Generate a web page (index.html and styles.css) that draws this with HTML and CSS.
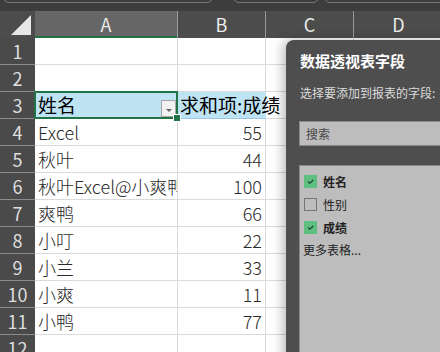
FILE: index.html
```html
<!DOCTYPE html>
<html lang="zh-CN">
<head>
<meta charset="UTF-8">
<title>数据透视表</title>
<link rel="stylesheet" href="styles.css">
</head>
<body>

<div class="topbar">
  <div class="tab tab-1"></div>
  <div class="tab tab-2"></div>
  <div class="tab tab-3"></div>
</div>

<div class="sheet">
  <!-- column headers -->
  <div class="corner"><span class="corner-tri"></span></div>
  <div class="colhead active">A</div>
  <div class="colhead">B</div>
  <div class="colhead">C</div>
  <div class="colhead">D</div>

  <div class="rowhead">1</div><div class="cell"></div><div class="cell"></div><div class="cell"></div><div class="cell"></div>
  <div class="rowhead">2</div><div class="cell"></div><div class="cell"></div><div class="cell"></div><div class="cell"></div>

  <div class="rowhead">3</div>
  <div class="cell pivot-head selected">姓名<span class="dropdown"></span><span class="handle"></span></div>
  <div class="cell pivot-head overflow">求和项:成绩</div>
  <div class="cell"></div><div class="cell"></div>

  <div class="rowhead">4</div><div class="cell">Excel</div><div class="cell num">55</div><div class="cell"></div><div class="cell"></div>
  <div class="rowhead">5</div><div class="cell">秋叶</div><div class="cell num">44</div><div class="cell"></div><div class="cell"></div>
  <div class="rowhead">6</div><div class="cell">秋叶Excel@小爽鸭</div><div class="cell num">100</div><div class="cell"></div><div class="cell"></div>
  <div class="rowhead">7</div><div class="cell">爽鸭</div><div class="cell num">66</div><div class="cell"></div><div class="cell"></div>
  <div class="rowhead">8</div><div class="cell">小叮</div><div class="cell num">22</div><div class="cell"></div><div class="cell"></div>
  <div class="rowhead">9</div><div class="cell">小兰</div><div class="cell num">33</div><div class="cell"></div><div class="cell"></div>
  <div class="rowhead">10</div><div class="cell">小爽</div><div class="cell num">11</div><div class="cell"></div><div class="cell"></div>
  <div class="rowhead">11</div><div class="cell">小鸭</div><div class="cell num">77</div><div class="cell"></div><div class="cell"></div>
  <div class="rowhead">12</div><div class="cell"></div><div class="cell"></div><div class="cell"></div><div class="cell"></div>
</div>

<div class="pane">
  <div class="pane-title">数据透视表字段</div>
  <div class="pane-sub">选择要添加到报表的字段:</div>
  <div class="search">搜索</div>
  <div class="fields">
    <div class="field checked bold"><span class="box"><svg width="13" height="13" viewBox="0 0 13 13"><path d="M4 6.5 L5.8 8.3 L9.2 5" fill="none" stroke="#1f3a2a" stroke-width="1.1"/></svg></span>姓名</div>
    <div class="field"><span class="box"></span>性别</div>
    <div class="field checked bold"><span class="box"><svg width="13" height="13" viewBox="0 0 13 13"><path d="M4 6.5 L5.8 8.3 L9.2 5" fill="none" stroke="#1f3a2a" stroke-width="1.1"/></svg></span>成绩</div>
    <div class="more">更多表格...</div>
  </div>
</div>

</body>
</html>
```

FILE: styles.css
```css
body {
  margin: 0;
  width: 440px;
  height: 352px;
  overflow: hidden;
  background-color: #3d3d3d;
  font-family: "Noto Sans CJK SC", "Noto Sans", sans-serif;
  position: relative;
}

/* top strip with the bottoms of the ribbon boxes */
.topbar {
  height: 11px;
  display: flex;
  overflow: hidden;
  background-color: #3d3d3d;
}

.tab {
  height: 14px;
  margin-top: -11px;
  border: 1px solid #787878;
  border-radius: 6px;
  box-sizing: border-box;
  flex-shrink: 0;
}

.tab-1 { margin-left: 3px; width: 210px; }
.tab-2 { margin-left: 20px; width: 86px; }
.tab-3 { margin-left: 5px; width: 130px; }

/* grid */
.sheet {
  display: grid;
  grid-template-columns: 35px 143px 88px 88px 90px;
  grid-template-rows: repeat(13, 27px);
  height: 341px;
  overflow: hidden;
  background-color: #fff;
}

.corner {
  background-color: #4c4c4c;
  position: relative;
}

.corner-tri {
  position: absolute;
  left: 11px;
  top: 4px;
  width: 20px;
  height: 20px;
  background-color: #e6e6e6;
  clip-path: polygon(100% 0, 100% 100%, 0 100%);
}

.colhead {
  background-color: #4c4c4c;
  color: #ececec;
  font-size: 18px;
  line-height: 27px;
  text-align: center;
  border-right: 1px solid #9a9a9a;
  box-sizing: border-box;
}

.colhead.active {
  background-color: #666;
  box-shadow: inset 0 -2px 0 #217346;
}

.rowhead {
  background-color: #4a4a4a;
  color: #dedede;
  font-size: 18px;
  line-height: 26px;
  text-align: center;
  border-bottom: 1px solid #8c8c8c;
  box-sizing: border-box;
}

.cell {
  border-right: 1px solid #dadada;
  border-bottom: 1px solid #dadada;
  box-sizing: border-box;
  padding-left: 3px;
  font-size: 18px;
  font-weight: 300;
  line-height: 26px;
  color: #2a2a2a;
  white-space: nowrap;
  overflow: hidden;
}

.cell.num {
  text-align: right;
  padding-right: 3px;
}

.pivot-head {
  background-color: #bee3f3;
  color: #000;
  font-size: 19px;
  font-weight: 400;
  border-bottom-color: #9cc4e6;
  border-right-color: #bee3f3;
}

.pivot-head.overflow {
  overflow: visible;
  padding-left: 2px;
}

.selected {
  position: relative;
  overflow: visible;
}

.selected::after {
  content: "";
  position: absolute;
  left: -1px;
  top: -1px;
  right: -1px;
  bottom: -1px;
  border: 2px solid #217346;
}

.dropdown {
  position: absolute;
  left: 126px;
  top: 8px;
  width: 15px;
  height: 17px;
  background-color: #f1f1f1;
  border: 1px solid #a8a8a8;
  box-sizing: border-box;
}

.dropdown::after {
  content: "";
  position: absolute;
  left: 4px;
  top: 8px;
  border-left: 3px solid transparent;
  border-right: 3px solid transparent;
  border-top: 3px solid #666;
}

.handle {
  position: absolute;
  right: -4px;
  bottom: -4px;
  width: 6px;
  height: 6px;
  background-color: #217346;
  border: 1px solid #fff;
  z-index: 2;
}

/* pivot field list pane */
.pane {
  position: absolute;
  left: 286px;
  top: 40px;
  right: -20px;
  bottom: -20px;
  background-color: #4e4e4e;
  border-top-left-radius: 8px;
  box-shadow: -3px 0 12px rgba(0, 0, 0, 0.28);
  padding: 11px 0 0 13px;
  color: #fff;
}

.pane-title {
  font-size: 15px;
  font-weight: bold;
  line-height: 20px;
  padding-left: 1px;
}

.pane-sub {
  margin-top: 14px;
  font-size: 12px;
  line-height: 16px;
  color: #dcdcdc;
  padding-left: 1px;
}

.search {
  margin-top: 20px;
  height: 25px;
  box-sizing: border-box;
  background-color: #bdbdbd;
  border: 1px solid #8a8a8a;
  color: #454545;
  font-size: 12px;
  line-height: 23px;
  padding-left: 6px;
}

.fields {
  margin-top: 19px;
  height: 200px;
  background-color: #bdbdbd;
  border: 1px solid #8a8a8a;
  border-right: none;
  padding: 4px 0 0 4px;
  color: #222;
  font-size: 12px;
}

.field {
  display: flex;
  align-items: center;
  gap: 6px;
  height: 23px;
}

.field.bold {
  font-weight: bold;
}

.box {
  width: 13px;
  height: 13px;
  box-sizing: border-box;
  border: 1px solid #767676;
  display: block;
}

.field.checked .box {
  background-color: #5dbf80;
  border-color: #5dbf80;
}

.box svg {
  display: block;
  margin: -1px;
}

.more {
  line-height: 22px;
  margin-left: -1px;
}
```
